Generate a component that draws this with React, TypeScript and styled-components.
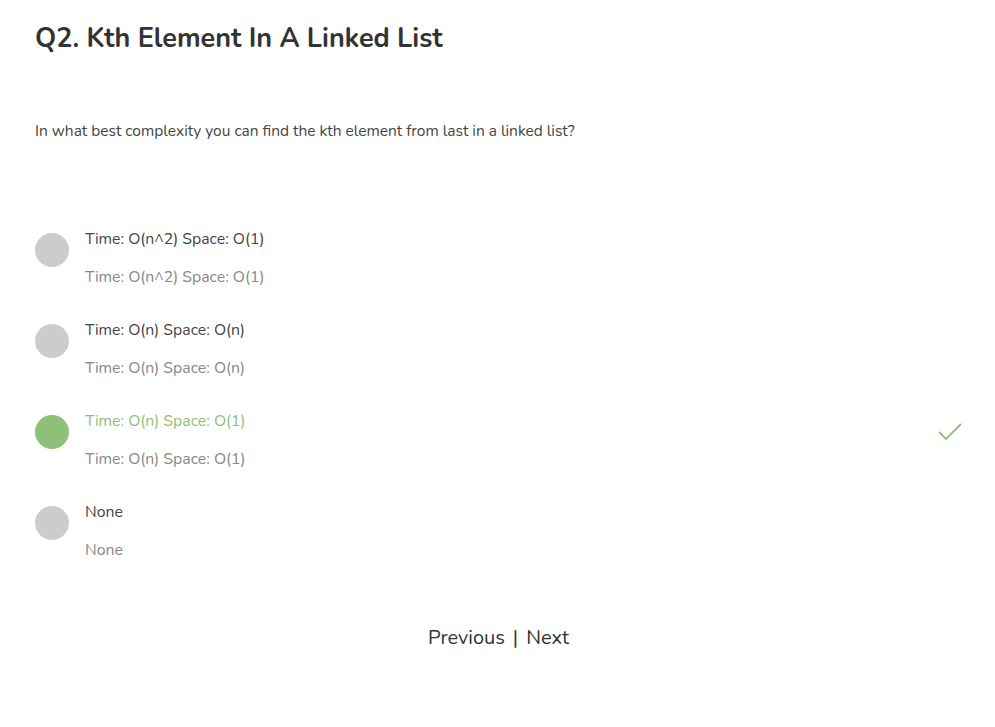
import styled, { createGlobalStyle } from 'styled-components';

const GlobalStyle = createGlobalStyle`
  body {
    margin: 0;
    background: #fff;
    font-family: "Nunito", "Open Sans", "Noto Sans", sans-serif;
  }
`;

const options = [
  { label: 'Time: O(n^2) Space: O(1)', correct: false },
  { label: 'Time: O(n) Space: O(n)', correct: false },
  { label: 'Time: O(n) Space: O(1)', correct: true },
  { label: 'None', correct: false },
];

export default function App() {
  return (
    <Page>
      <GlobalStyle />
      <Title>Q2. Kth Element In A Linked List</Title>
      <Question>
        In what best complexity you can find the kth element from last in a linked list?
      </Question>

      <OptionList>
        {options.map((opt) => (
          <OptionRow key={opt.label}>
            <Dot $correct={opt.correct} />
            <OptionText>
              <OptionLabel $correct={opt.correct}>{opt.label}</OptionLabel>
              <OptionSub>{opt.label}</OptionSub>
            </OptionText>
            {opt.correct && (
              <Check viewBox="0 0 24 18" width="24" height="18">
                <path d="M1 9 L8 16 L23 1" fill="none" stroke="#8cc176" strokeWidth="1.8" />
              </Check>
            )}
          </OptionRow>
        ))}
      </OptionList>

      <Pager>
        <PagerLink>Previous</PagerLink>
        <Divider>|</Divider>
        <PagerLink>Next</PagerLink>
      </Pager>
    </Page>
  );
}

const Page = styled.div`
  padding: 20px 33px 40px 35px;
  color: #333;
`;

const Title = styled.h1`
  margin: 0;
  font-size: 27px;
  font-weight: 700;
  line-height: 38px;
  color: #333;
`;

const Question = styled.p`
  margin: 63px 0 0 0;
  font-size: 15.5px;
  line-height: 20px;
  color: #444;
`;

const OptionList = styled.div`
  display: flex;
  flex-direction: column;
  gap: 33px;
  margin-top: 88px;
`;

const OptionRow = styled.div`
  display: flex;
  align-items: flex-start;
`;

const Dot = styled.div<{ $correct: boolean }>`
  width: 34px;
  height: 34px;
  border-radius: 50%;
  margin-top: 4px;
  flex-shrink: 0;
  background: ${({ $correct }) => ($correct ? '#8cc176' : '#cccccc')};
`;

const OptionText = styled.div`
  display: flex;
  flex-direction: column;
  gap: 18px;
  margin-left: 16px;
  flex: 1;
`;

const OptionLabel = styled.div<{ $correct: boolean }>`
  font-size: 15.8px;
  line-height: 20px;
  color: ${({ $correct }) => ($correct ? '#8cc176' : '#444')};
`;

const OptionSub = styled.div`
  font-size: 15.8px;
  line-height: 20px;
  color: #888;
`;

const Check = styled.svg`
  margin-top: 12px;
  flex-shrink: 0;
`;

const Pager = styled.div`
  display: flex;
  justify-content: center;
  align-items: center;
  gap: 8px;
  margin-top: 64px;
  font-size: 20px;
  color: #333;
`;

const PagerLink = styled.span`
  cursor: pointer;
`;

const Divider = styled.span`
  color: #333;
`;
